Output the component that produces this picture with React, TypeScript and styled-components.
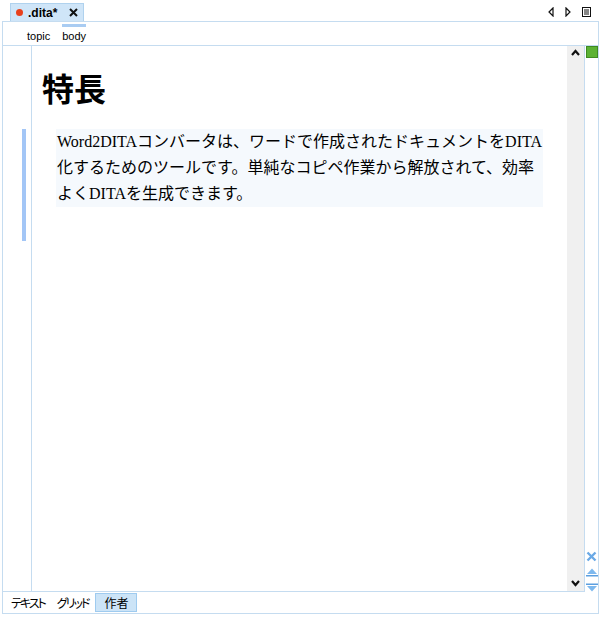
import React from "react";
import styled, { createGlobalStyle } from "styled-components";

const Global = createGlobalStyle`
  html, body { margin: 0; padding: 0; background: #ffffff; }
  body { font-family: "Liberation Sans", "Noto Sans CJK JP", sans-serif; }
`;

const LINE = "#c5dcf0";

const Page = styled.div`
  width: 600px;
  height: 617px;
  background: #fff;
  overflow: hidden;
`;

const TopBar = styled.div`
  height: 21px;
  display: flex;
  align-items: flex-end;
  padding-left: 10px;
  padding-right: 9px;
`;

const FileTab = styled.div`
  height: 18px;
  box-sizing: border-box;
  width: 74px;
  background: #cfe5f8;
  border: 1px solid #b0d2ee;
  border-bottom: none;
  display: flex;
  align-items: center;
  padding-left: 5px;
  gap: 5px;
  font-size: 12px;
  font-weight: bold;
  color: #000;
`;

const Dot = styled.span`
  width: 7px;
  height: 7px;
  border-radius: 50%;
  background: #e8401c;
  display: inline-block;
`;

const TabName = styled.span`
  width: 36px;
  line-height: 14px;
`;

const TopIcons = styled.div`
  margin-left: auto;
  align-self: center;
  display: flex;
  align-items: center;
  gap: 11px;
  padding-top: 2px;
`;

const Frame = styled.div`
  margin-left: 2px;
  width: 597px;
  box-sizing: border-box;
  border: 1px solid ${LINE};
  height: 593px;
  display: flex;
  flex-direction: column;
`;

const Crumbs = styled.div`
  height: 24px;
  box-sizing: border-box;
  border-bottom: 1px solid ${LINE};
  display: flex;
  padding-left: 21px;
  gap: 6px;
`;

const Crumb = styled.div<{ $active?: boolean }>`
  display: flex;
  flex-direction: column;
  align-items: center;
  padding: 0 3px;
  font-size: 11px;
  color: #000;
  &::before {
    content: "";
    display: block;
    width: 100%;
    height: 3px;
    margin-top: 2px;
    margin-bottom: 3px;
    background: ${(p) => (p.$active ? "#a9ccf2" : "transparent")};
  }
`;

const MainRow = styled.div`
  flex: 1;
  display: flex;
  min-height: 0;
`;

const Editor = styled.div`
  width: 582px;
  box-sizing: border-box;
  border-right: 1px solid ${LINE};
  border-bottom: 1px solid ${LINE};
  display: flex;
`;

const Gutter = styled.div`
  width: 29px;
  box-sizing: border-box;
  border-right: 1px solid ${LINE};
  display: flex;
  flex-direction: column;
`;

const Marker = styled.div`
  margin-top: 83px;
  margin-left: 19px;
  width: 4px;
  height: 112px;
  background: #a3c6f6;
`;

const Content = styled.div`
  width: 535px;
  padding-left: 10px;
  box-sizing: border-box;
`;

const Heading = styled.h1`
  margin: 21px 0 0 0;
  font-family: "Noto Sans CJK JP", sans-serif;
  font-weight: bold;
  font-size: 32px;
  line-height: 40px;
  height: 40px;
  color: #000;
`;

const Para = styled.p`
  margin: 22px 0 0 14px;
  width: 487px;
  padding-left: 1px;
  box-sizing: border-box;
  background: #f5f9fd;
  font-family: "Liberation Serif", "Noto Sans CJK JP", serif;
  font-size: 16px;
  line-height: 26px;
  color: #000;
  white-space: nowrap;
`;

const Scroll = styled.div`
  width: 17px;
  background: #f0f0f0;
  display: flex;
  flex-direction: column;
  align-items: center;
  justify-content: space-between;
  padding: 3px 0 4px;
  box-sizing: border-box;
`;

const Side = styled.div`
  width: 13px;
  display: flex;
  flex-direction: column;
  align-items: center;
  box-sizing: border-box;
`;

const Green = styled.div`
  width: 12px;
  height: 12px;
  box-sizing: border-box;
  background: #5cb233;
  border: 1px solid #3f8a22;
  margin-left: 1px;
`;

const SideTools = styled.div`
  margin-top: auto;
  display: flex;
  flex-direction: column;
  align-items: center;
  gap: 6px;
  margin-bottom: 0px;
`;

const BottomTabs = styled.div`
  height: 21px;
  display: flex;
  align-items: center;
  padding-left: 2px;
`;

const ModeTab = styled.div<{ $active?: boolean }>`
  height: 19px;
  box-sizing: border-box;
  display: flex;
  align-items: center;
  padding: 0 ${(p) => (p.$active ? "8px" : "5px")};
  margin-left: ${(p) => (p.$active ? "1px" : "0")};
  font-family: "Noto Sans CJK JP", sans-serif;
  font-feature-settings: "palt";
  letter-spacing: ${(p) => (p.$active ? "0" : "-2px")};
  font-size: 12px;
  color: #000;
  background: ${(p) => (p.$active ? "#cce4f7" : "transparent")};
  border: 1px solid ${(p) => (p.$active ? "#9fcbef" : "transparent")};
`;

const Chevron = ({ up }: { up?: boolean }) => (
  <svg width="9" height="7" viewBox="0 0 9 7">
    <polyline
      points={up ? "1,6 4.5,2 8,6" : "1,1 4.5,5 8,1"}
      fill="none"
      stroke="#111"
      strokeWidth="2.2"
    />
  </svg>
);

export default function App() {
  return (
    <Page>
      <Global />
      <TopBar>
        <FileTab>
          <Dot />
          <TabName>.dita*</TabName>
          <svg width="9" height="9" viewBox="0 0 9 9">
            <path d="M1 1 L8 8 M8 1 L1 8" stroke="#111" strokeWidth="2" />
          </svg>
        </FileTab>
        <TopIcons>
          <svg width="6" height="10" viewBox="0 0 6 10">
            <path d="M5 1 L1 5 L5 9 Z" fill="none" stroke="#111" strokeWidth="1.2" />
          </svg>
          <svg width="6" height="10" viewBox="0 0 6 10">
            <path d="M1 1 L5 5 L1 9 Z" fill="none" stroke="#111" strokeWidth="1.2" />
          </svg>
          <svg width="9" height="10" viewBox="0 0 9 10">
            <rect x="0.5" y="0.5" width="8" height="9" fill="none" stroke="#111" />
            <path d="M2 3 H7 M2 5 H7 M2 7 H7" stroke="#111" />
          </svg>
        </TopIcons>
      </TopBar>
      <Frame>
        <Crumbs>
          <Crumb>topic</Crumb>
          <Crumb $active>body</Crumb>
        </Crumbs>
        <MainRow>
          <Editor>
            <Gutter>
              <Marker />
            </Gutter>
            <Content>
              <Heading>特長</Heading>
              <Para>
                Word2DITAコンバータは、ワードで作成されたドキュメントをDITA
                <br />
                化するためのツールです。単純なコピペ作業から解放されて、効率
                <br />
                よくDITAを生成できます。
              </Para>
            </Content>
            <Scroll>
              <Chevron up />
              <Chevron />
            </Scroll>
          </Editor>
          <Side>
            <Green />
            <SideTools>
              <svg width="11" height="11" viewBox="0 0 11 11">
                <path d="M1.5 1.5 L9.5 9.5 M9.5 1.5 L1.5 9.5" stroke="#6aa9e6" strokeWidth="2.4" />
              </svg>
              <svg width="12" height="9" viewBox="0 0 12 9">
                <path d="M6 0.5 L11 6 L1 6 Z" fill="#7db8ee" />
                <rect x="0" y="7" width="12" height="1.5" fill="#5c9fe0" />
              </svg>
              <svg width="12" height="9" viewBox="0 0 12 9">
                <rect x="0" y="0.5" width="12" height="1.5" fill="#5c9fe0" />
                <path d="M1 3 L11 3 L6 8.5 Z" fill="#7db8ee" />
              </svg>
            </SideTools>
          </Side>
        </MainRow>
        <BottomTabs>
          <ModeTab>テキスト</ModeTab>
          <ModeTab>グリッド</ModeTab>
          <ModeTab $active>作者</ModeTab>
        </BottomTabs>
      </Frame>
    </Page>
  );
}
